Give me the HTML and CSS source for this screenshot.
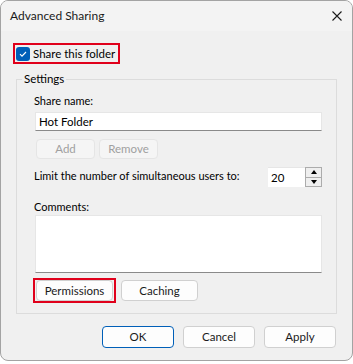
FILE: index.html
```html
<!DOCTYPE html>
<html lang="en">
<head>
    <meta charset="UTF-8">
    <title>Advanced Sharing</title>
    <link rel="stylesheet" href="styles.css">
</head>
<body>
    <div class="window">
        <div class="titlebar">
            <span class="title">Advanced Sharing</span>
            <svg class="close" width="10" height="10" viewBox="0 0 10 10">
                <path d="M0.5 0.5 L9.5 9.5 M9.5 0.5 L0.5 9.5" stroke="#1a1a1a" stroke-width="1.1" fill="none"/>
            </svg>
        </div>

        <div class="content">
            <label class="share-row highlight">
                <span class="check">
                    <svg width="14" height="14" viewBox="0 0 14 14">
                        <path d="M4 7.2 L6 9.2 L10 5" stroke="#fff" stroke-width="1.1" fill="none"/>
                    </svg>
                </span>
                <span>Share this folder</span>
            </label>

            <fieldset class="group">
                <legend>Settings</legend>

                <div class="label first">Share name:</div>
                <div class="field">Hot Folder</div>

                <div class="row small-buttons">
                    <button class="btn disabled">Add</button>
                    <button class="btn disabled">Remove</button>
                </div>

                <div class="row limit-row">
                    <span class="limit-text">Limit the number of simultaneous users to:</span>
                    <div class="spinner">
                        <div class="spin-value">20</div>
                        <div class="spin-arrows">
                            <div class="arrow up"></div>
                            <div class="arrow down"></div>
                        </div>
                    </div>
                </div>

                <div class="label comments-label">Comments:</div>
                <div class="field area"></div>

                <div class="row bottom-row">
                    <div class="highlight perm-box">
                        <button class="btn wide">Permissions</button>
                    </div>
                    <button class="btn wide">Caching</button>
                </div>
            </fieldset>

            <div class="dialog-buttons">
                <button class="btn dlg default">OK</button>
                <button class="btn dlg">Cancel</button>
                <button class="btn dlg">Apply</button>
            </div>
        </div>
    </div>
</body>
</html>
```

FILE: styles.css
```css
body {
    margin: 0;
    background-color: #ffffff;
    font-family: "Segoe UI", Lato, "Noto Sans", sans-serif;
    font-size: 11px;
    line-height: 16px;
    color: #000000;
}

.window {
    width: 353px;
    height: 361px;
    box-sizing: border-box;
    border: 1px solid #a3a3a3;
    border-radius: 8px;
    background-color: #f0f0f0;
    overflow: hidden;
}

.titlebar {
    height: 30px;
    background-color: #f3f3f3;
    display: flex;
    align-items: center;
    justify-content: space-between;
    padding: 0 10px 0 9px;
}

.title {
    color: #1a1a1a;
    font-size: 12px;
    margin-top: -1px;
}

.content {
    padding: 12px 0 0 0;
}

.highlight {
    border: 2px solid #e0001b;
}

.share-row {
    display: flex;
    width: max-content;
    align-items: center;
    gap: 3px;
    margin-left: 12px;
    padding: 0 3px 0 1px;
    height: 17px;
    font-size: 11.5px;
}

.check {
    width: 14px;
    height: 14px;
    border-radius: 3px;
    background-color: #005fb8;
    display: flex;
}

.group {
    margin: 7px 15px 0 15px;
    padding: 0 14px 10px 17px;
    border: 1px solid #dcdcdc;
    min-width: 0;
}

.group legend {
    padding: 0 2px;
    margin-left: -12px;
    font-size: 11.5px;
}

.label.first {
    margin-top: 6px;
}

.field {
    background-color: #ffffff;
    border: 1px solid #e6e6e6;
    border-bottom-color: #8a8a8a;
    height: 17px;
    margin-top: 3px;
    margin-left: 1px;
    padding-left: 3px;
    line-height: 17px;
    font-size: 11.5px;
}

.row {
    display: flex;
}

.btn {
    font-family: inherit;
    font-size: 11.5px;
    line-height: 16px;
    background-color: #fdfdfd;
    border: 1px solid #d0d0d0;
    border-radius: 4px;
    color: #1a1a1a;
    padding: 0;
    height: 21px;
}

.small-buttons {
    margin-top: 8px;
    margin-left: 2px;
    gap: 4px;
}

.btn.disabled {
    width: 59px;
    height: 20px;
    background-color: #f5f5f5;
    border-color: #e5e5e5;
    color: #a0a0a0;
}

.limit-row {
    margin-top: 8px;
    justify-content: space-between;
    align-items: flex-start;
}

.limit-text {
    white-space: nowrap;
    padding-top: 1px;
}

.spinner {
    display: flex;
    height: 20px;
}

.spin-value {
    width: 37px;
    background-color: #ffffff;
    border-top: 1px solid #e6e6e6;
    box-sizing: border-box;
    padding: 2px 0 0 3px;
    font-size: 11.5px;
}

.spin-arrows {
    width: 17px;
    border: 1px solid #acacac;
    box-sizing: border-box;
    display: flex;
    flex-direction: column;
    background-color: #efefef;
}

.arrow {
    flex: 1;
    display: flex;
    align-items: center;
    justify-content: center;
}

.arrow.up {
    border-bottom: 1px solid #acacac;
}

.arrow::after {
    content: "";
    border-left: 3.5px solid transparent;
    border-right: 3.5px solid transparent;
}

.arrow.up::after {
    border-bottom: 4px solid #000;
}

.arrow.down::after {
    border-top: 4px solid #000;
}

.comments-label {
    margin-top: 12px;
}

.field.area {
    height: 56px;
    margin-top: 0;
}

.bottom-row {
    margin-top: 5px;
    margin-left: -1px;
    gap: 5px;
    align-items: center;
}

.perm-box {
    padding: 0 1px;
}

.btn.wide {
    width: 77px;
}

.perm-box .btn.wide {
    display: block;
}

.dialog-buttons {
    display: flex;
    justify-content: flex-end;
    gap: 9px;
    margin: 12px 16px 0 0;
}

.btn.dlg {
    width: 72px;
    height: 22px;
}

.btn.default {
    border-color: #005fb8;
}
```
